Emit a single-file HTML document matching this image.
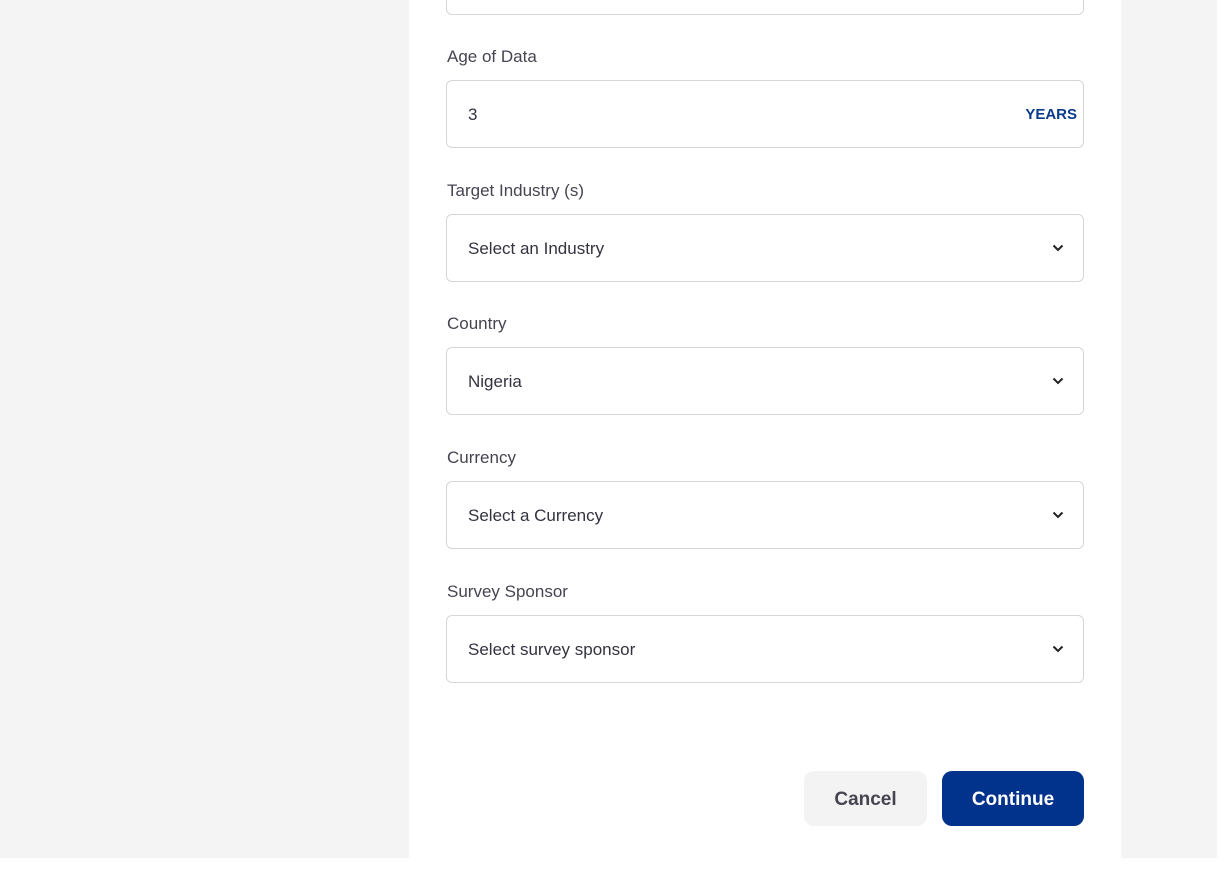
<!DOCTYPE html>
<html><head><style>
body{margin:0;width:1227px;height:879px;background:#fff;position:relative;overflow:hidden;font-family:"Liberation Sans",sans-serif}
.bg{position:absolute;left:0;top:0;width:1217px;height:858px;background:#f4f4f4}
.panel{position:absolute;left:409px;top:0;width:712px;height:858px;background:#fff}
.lbl{position:absolute;left:447px;font-size:17px;color:#454552}
.inp{position:absolute;left:446px;width:636px;height:66px;border:1px solid #d6d6d6;border-radius:6px;background:#fff}
.inp span{position:absolute;left:21px;top:24px;font-size:17px;color:#333340}
.chev{position:absolute;right:19px;top:29px}
.yrs{position:absolute;right:6px;top:25px;font-size:15px;font-weight:bold;color:#0a3a8c}
.btn{position:absolute;top:771px;height:55px;border-radius:10px;font-size:19px;font-weight:bold;text-align:center;line-height:57px}
</style></head><body>
<div class="bg"></div><div class="panel"></div>
<div class="inp" style="top:-53px"></div>
<div class="lbl" style="top:47px">Age of Data</div>
<div class="inp" style="top:80px"><span>3</span><div class="yrs">YEARS</div></div>
<div class="lbl" style="top:181px">Target Industry (s)</div>
<div class="inp" style="top:214px"><span>Select an Industry</span><svg class="chev" width="12" height="8" viewBox="0 0 12 8"><path d="M1.5 1.5L6 6l4.5-4.5" fill="none" stroke="#222" stroke-width="2"/></svg></div>
<div class="lbl" style="top:314px">Country</div>
<div class="inp" style="top:347px"><span>Nigeria</span><svg class="chev" width="12" height="8" viewBox="0 0 12 8"><path d="M1.5 1.5L6 6l4.5-4.5" fill="none" stroke="#222" stroke-width="2"/></svg></div>
<div class="lbl" style="top:448px">Currency</div>
<div class="inp" style="top:481px"><span>Select a Currency</span><svg class="chev" width="12" height="8" viewBox="0 0 12 8"><path d="M1.5 1.5L6 6l4.5-4.5" fill="none" stroke="#222" stroke-width="2"/></svg></div>
<div class="lbl" style="top:582px">Survey Sponsor</div>
<div class="inp" style="top:615px"><span>Select survey sponsor</span><svg class="chev" width="12" height="8" viewBox="0 0 12 8"><path d="M1.5 1.5L6 6l4.5-4.5" fill="none" stroke="#222" stroke-width="2"/></svg></div>
<div class="btn" style="left:804px;width:123px;background:#f3f3f3;color:#454552">Cancel</div>
<div class="btn" style="left:942px;width:142px;background:#02338c;color:#fff">Continue</div>
</body></html>
